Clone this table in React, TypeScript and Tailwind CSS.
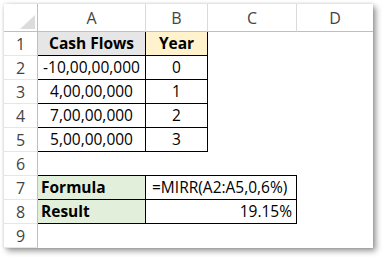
// Static mock of an Excel sheet showing a MIRR example.

const font = { fontFamily: '"Open Sans", "Liberation Sans", sans-serif' };

function Corner() {
  return (
    <div className="relative border-r border-b border-[#bfbfbf]">
      <svg className="absolute left-[16px] top-[11px]" width="16" height="14" viewBox="0 0 16 14">
        <polygon points="15,0 15,14 0,14" fill="#dcdcdc" />
      </svg>
    </div>
  );
}

function ColHead({ label, last = false }: { label: string; last?: boolean }) {
  return (
    <div
      className={`flex items-center justify-center border-b border-[#bfbfbf] text-[16px] text-[#444] ${
        last ? "" : "border-r border-r-[#dadada]"
      }`}
    >
      {label}
    </div>
  );
}

function RowHead({ n }: { n: number }) {
  return (
    <div className="flex items-center justify-center border-r border-b border-r-[#bfbfbf] border-b-[#e6e6e6] text-[16px] text-[#444]">
      {n}
    </div>
  );
}

const flows = [
  ["-10,00,00,000", "0"],
  ["4,00,00,000", "1"],
  ["7,00,00,000", "2"],
  ["5,00,00,000", "3"],
];

export default function App() {
  return (
    <div className="h-[257px] w-[383px] bg-white p-[4px]" style={font}>
      <div className="grid w-[369px] grid-cols-[34px_108px_62px_89px_76px] grid-rows-[28px_repeat(9,24px)] bg-white text-[15.5px] text-black shadow-[3px_3px_6px_rgba(0,0,0,0.4),0_0_3px_rgba(0,0,0,0.15)]">
        <Corner />
        <ColHead label="A" />
        <ColHead label="B" />
        <ColHead label="C" />
        <ColHead label="D" last />

        {/* row 1: headings */}
        <RowHead n={1} />
        <div className="flex items-center justify-center border-r border-b border-black bg-[#e7e6e6] font-bold">
          Cash Flows
        </div>
        <div className="flex items-center justify-center border-r border-b border-black bg-[#fff2cc] font-bold">
          Year
        </div>
        <div />
        <div />

        {flows.map(([amount, year], i) => (
          <div key={amount} className="contents">
            <RowHead n={i + 2} />
            <div className="flex items-center justify-center border-r border-b border-black">{amount}</div>
            <div className="flex items-center justify-center border-r border-b border-black">{year}</div>
            <div />
            <div />
          </div>
        ))}

        <RowHead n={6} />
        <div className="border-b border-black" />
        <div className="border-b border-black" />
        <div className="border-b border-black" />
        <div />

        <RowHead n={7} />
        <div className="flex items-center border-r border-b border-black bg-[#e2efda] pl-[3px] font-bold">
          Formula
        </div>
        <div className="col-span-2 flex items-center border-r border-b border-black pl-[6px]">
          =MIRR(A2:A5,0,6%)
        </div>
        <div />

        <RowHead n={8} />
        <div className="flex items-center border-r border-b border-black bg-[#e2efda] pl-[3px] font-bold">
          Result
        </div>
        <div className="col-span-2 flex items-center justify-end border-r border-b border-black pr-[4px]">
          19.15%
        </div>
        <div />

        <RowHead n={9} />
        <div />
        <div />
        <div />
        <div />
      </div>
    </div>
  );
}
